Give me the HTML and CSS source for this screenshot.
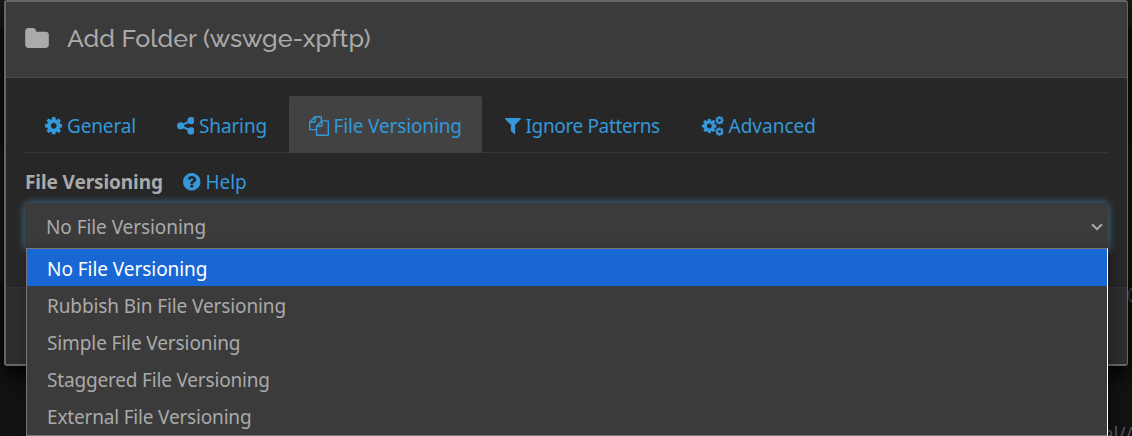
FILE: index.html
```html
<!DOCTYPE html>
<html lang="en">
<head>
<meta charset="utf-8">
<title>Add Folder</title>
<link rel="stylesheet" href="styles.css">
</head>
<body>
<svg class="defs" width="0" height="0">
  <symbol id="cog" viewBox="128 128 1536 1536"><path d="M1152 896q0-106-75-181t-181-75-181 75-75 181 75 181 181 75 181-75 75-181zm512-109v222q0 12-8 23t-20 13l-185 28q-19 54-39 91 35 50 107 138 10 12 10 25t-9 23q-27 37-99 108t-94 71q-12 0-26-9l-138-108q-44 23-91 38-16 136-29 186-7 28-36 28h-222q-14 0-24.5-8.5t-11.5-21.5l-28-184q-49-16-90-37l-141 107q-10 9-25 9-14 0-25-11-126-114-165-168-7-10-7-23 0-12 8-23 15-21 51-66.5t54-70.5q-27-50-41-99l-183-27q-13-2-21-12.5t-8-23.5v-222q0-12 8-23t19-13l186-28q14-46 39-92-40-57-107-138-10-12-10-24 0-10 9-23 26-36 98.5-107.5t94.500-71.5q13 0 26 10l138 107q44-23 91-38 16-136 29-186 7-28 36-28h222q14 0 24.5 8.5t11.5 21.500l28 184q49 16 90 37l142-107q9-9 24-9 13 0 25 10 129 119 165 170 7 8 7 22 0 12-8 23-15 21-51 66.500t-54 70.500q26 50 41 98l183 28q13 2 21 12.500t8 23.500z"/></symbol>
</svg>
<div class="page">
  <div class="backdrop-band top"></div>
  <div class="backdrop-band middle"></div>
  <div class="backdrop-text upper">0</div>
  <div class="backdrop-text lower">al//</div>
  <div class="modal">
    <div class="modal-header">
      <svg class="folder" viewBox="64 128 1664 1408"><path d="M1728 608v704q0 92-66 158t-158 66h-1216q-92 0-158-66t-66-158v-960q0-92 66-158t158-66h320q92 0 158 66t66 158v32h672q92 0 158 66t66 158z"/></svg>
      <h4 class="title">Add Folder (wswge-xpftp)</h4>
    </div>
    <div class="modal-body">
      <div class="tabs">
        <a class="tab general"><svg class="icon"><use href="#cog"/></svg><span>General</span></a>
        <a class="tab sharing"><svg class="icon" viewBox="0 0 17 17"><path d="M13.500 3.500L3.500 8.500L13.500 13.500" fill="none" stroke="currentColor" stroke-width="2"/><circle cx="3.500" cy="8.500" r="3.500"/><circle cx="13.600" cy="3.500" r="3.500"/><circle cx="13.600" cy="13.500" r="3.500"/></svg><span>Sharing</span></a>
        <a class="tab versioning active"><svg class="files" viewBox="0 0 20 20"><path d="M7 13.600H1.300Q.7 13.600.7 13V6L6 .7H11.700Q12.300.7 12.300 1.300V5M.7 6H5.400Q6 6 6 5.400V.7M12.900 4.900H18.700Q19.300 4.900 19.300 5.500V18.700Q19.300 19.300 18.700 19.300H8.200Q7.600 19.300 7.600 18.700V10.200L12.900 4.900ZM7.600 10.200H12.300Q12.900 10.200 12.900 9.600V4.900"/></svg><span>File Versioning</span></a>
        <a class="tab ignore"><svg class="funnel" viewBox="192 256 1408 1408"><path d="M1595 295q17 41-14 70l-493 493v742q0 42-39 59-13 5-25 5-27 0-45-19l-256-256q-19-19-19-45v-486l-493-493q-31-29-14-70 17-39 59-39h1280q42 0 59 39z"/></svg><span>Ignore Patterns</span></a>
        <a class="tab advanced"><svg class="cogs" viewBox="0 0 22 20"><use href="#cog" x="0" y="2.700" width="14.600" height="14.600"/><use href="#cog" x="13.200" y="0" width="8.600" height="8.600"/><use href="#cog" x="13.200" y="11.300" width="8.600" height="8.600"/></svg><span>Advanced</span></a>
      </div>
      <div class="label-row">
        <label class="label">File Versioning</label>
        <a class="help"><svg class="icon" viewBox="128 128 1536 1536"><path d="M1024 1376v-192q0-14-9-23t-23-9h-192q-14 0-23 9t-9 23v192q0 14 9 23t23 9h192q14 0 23-9t9-23zm256-672q0-88-55.500-163t-138.500-116-170-41q-243 0-371 213-15 24 8 42l132 100q7 6 19 6 16 0 25-12 53-68 86-92 34-24 86-24 48 0 85.500 26t37.500 59q0 38-20 61t-68 45q-63 28-115.500 86.500t-52.500 125.500v36q0 14 9 23t23 9h192q14 0 23-9t9-23q0-19 21.500-49.500t54.500-49.500q32-18 49-28.500t46-35 44.500-48 28-60.500 12.500-81zm384 192q0 209-103 385.500t-279.500 279.500-385.500 103-385.500-103-279.500-279.500-103-385.500 103-385.500 279.500-279.500 385.500-103 385.500 103 279.500 279.500 103 385.500z"/></svg><span>Help</span></a>
      </div>
      <div class="select"><span>No File Versioning</span>
        <svg class="chevron" viewBox="0 0 12 8"><path d="M1 1.200L6 6.200L11 1.200"/></svg>
      </div>
    </div>
    <div class="modal-footer"></div>
  </div>
  <div class="menu">
    <div class="option selected">No File Versioning</div>
    <div class="option">Rubbish Bin File Versioning</div>
    <div class="option">Simple File Versioning</div>
    <div class="option tight">Staggered File Versioning</div>
    <div class="option tight">External File Versioning</div>
  </div>
</div>
</body>
</html>
```

FILE: styles.css
```css
* { box-sizing: border-box; }
body {
  margin: 0;
  background: #121212;
  color: #aaa;
  font: 19px/28px "Noto Sans", "Open Sans", sans-serif;
  letter-spacing: -.07px;
}
svg { fill: currentColor; flex: none; }
.defs { position: absolute; }
.page {
  position: relative;
  width: 1132px;
  height: 436px;
  overflow: hidden;
  padding-left: 4px;
}
.backdrop-band { position: absolute; left: 0; width: 1132px; }
.top { top: 0; height: 27px; background: #1b1b1b; border-bottom: 1px solid #262626; }
.middle { top: 145px; height: 136px; background: #191919; }
.backdrop-text { position: absolute; color: #555; }
.upper { left: 1127px; top: 281px; }
.lower { left: 1103px; top: 420px; }
.modal {
  position: relative;
  width: 1124px;
  height: 366px;
  border: 2px solid #666;
  border-right-width: 1px;
  border-radius: 3px;
  background: #272727;
  box-shadow: 0 8px 22px #000;
}
.modal-header {
  height: 76px;
  padding: 0 19px 3px;
  display: flex;
  align-items: center;
  background: #3b3b3b;
  border-bottom: 1px solid #484848;
}
.folder { width: 24px; height: 20px; margin-right: 18px; }
.title {
  margin: 0;
  font: 500 25px/30px Raleway, Lato, sans-serif;
  letter-spacing: .04px;
}
.modal-body { height: 209px; padding: 18px 19px 0; }
.tabs {
  display: flex;
  height: 57px;
  border-bottom: 1px solid #363636;
}
.tab {
  display: flex;
  align-items: center;
  height: 57px;
  padding: 3px 0 0 19.5px;
  gap: 5px;
  color: #3498db;
  border-radius: 2px 2px 0 0;
  letter-spacing: -.14px;
  white-space: nowrap;
}
.active { background: #424242; }
.general { width: 132px; }
.sharing { width: 132px; }
.versioning { width: 193px; margin-right: 3px; }
.ignore { width: 197px; letter-spacing: -.36px; }
.advanced { letter-spacing: 0; }
.icon { width: 17.5px; height: 17.5px; }
.files { width: 20px; height: 20px; fill: none; stroke: currentColor; stroke-width: 1.4; }
.funnel { width: 16px; height: 16px; }
.cogs { width: 22px; height: 20px; }
.label-row { display: flex; height: 50px; padding-top: 15px; }
.label { width: 158px; font-weight: 700; white-space: nowrap; letter-spacing: -.1px; }
.help { display: flex; align-items: center; height: 28px; gap: 5px; color: #3498db; }
.select {
  height: 47px;
  display: flex;
  align-items: center;
  justify-content: space-between;
  padding: 0 5px 0 21px;
  background: #3b3b3b;
  border-radius: 3px;
  box-shadow: 0 0 8px rgba(82, 145, 195, .75);
}
.chevron { width: 12px; height: 8px; fill: none; stroke: #aaa; stroke-width: 2; }
.modal-footer { height: 77px; background: #2d2d2d; border-top: 1px solid #333; }
.menu {
  position: absolute;
  left: 26px;
  top: 248px;
  width: 1082px;
  height: 188px;
  background: #3b3b3b;
  border: 1px solid #777;
  border-right: 1px solid #fff;
  box-shadow: 3px 3px 10px rgba(0, 0, 0, .35);
}
.option { height: 37px; padding-left: 20px; line-height: 41px; letter-spacing: -.11px; }
.tight { letter-spacing: -.18px; }
.selected { background: #1967d4; color: #fff; letter-spacing: -.05px; }
```
